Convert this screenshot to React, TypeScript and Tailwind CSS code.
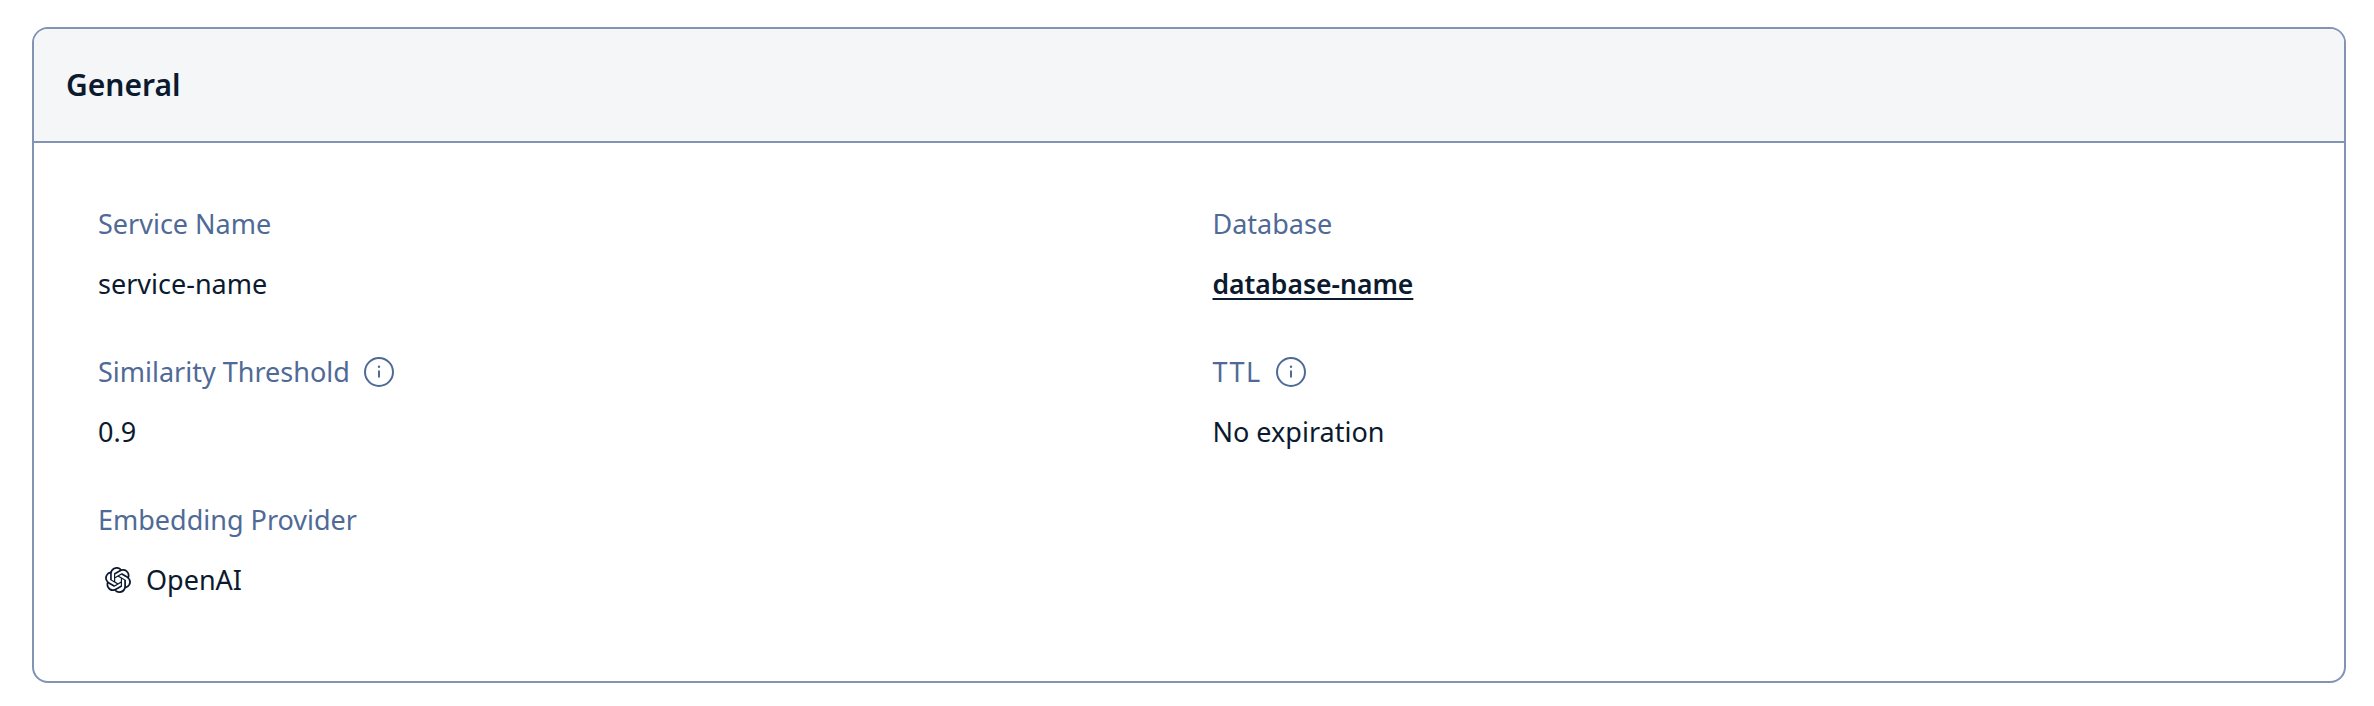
import React from 'react'
import { SiOpenai } from 'react-icons/si'

function InfoIcon(){
  return (
    <svg width="30" height="30" viewBox="0 0 30 30" fill="none" className="text-[#4f6a96]">
      <circle cx="15" cy="15" r="14" stroke="currentColor" strokeWidth="2" />
      <path d="M15 13.5v7" stroke="currentColor" strokeWidth="2" />
      <circle cx="15" cy="9.8" r="1.2" fill="currentColor" />
    </svg>
  )
}

function Field({ label, info, labelClass, children }: { label: string; info?: boolean; labelClass?: string; children: React.ReactNode }){
  return (
    <div className="h-[148px]">
      <div className="flex items-center gap-[14px] h-[36px] text-[27px] leading-[36px] text-[#4f6a96]">
        <span className={labelClass}>{label}</span>
        {info && <InfoIcon />}
      </div>
      <div className="flex items-center h-[36px] mt-6 text-[27px] leading-[36px] text-[#0b1a2e]">{children}</div>
    </div>
  )
}

export default function App(){
  return (
    <div className="min-h-[706px] bg-white pl-8 pr-7 pt-[27px] font-['Noto_Sans','Open_Sans',sans-serif]">
      <div className="h-[656px] rounded-2xl border-2 border-[#8293b4] overflow-hidden">
        <div className="h-[114px] flex items-center px-8 pb-[2px] bg-[#f4f6f8] border-b-2 border-[#8293b4]">
          <h2 className="text-[30px] font-semibold text-[#0b1a2e]">General</h2>
        </div>
        <div className="grid grid-cols-2 gap-x-[44px] pl-16 pr-[61px] pt-[63px]">
          <Field label="Service Name">service-name</Field>
          <Field label="Database"><a className="text-[26.5px] font-semibold underline decoration-2 underline-offset-4">database-name</a></Field>
          <Field label="Similarity Threshold" info>0.9</Field>
          <Field label="TTL" info labelClass="tracking-[1.5px]">No expiration</Field>
          <Field label="Embedding Provider">
            <SiOpenai className="w-[26px] h-[26px] ml-[7px] mr-[15px] text-[#0b1a2e]" />OpenAI
          </Field>
        </div>
      </div>
    </div>
  )
}
